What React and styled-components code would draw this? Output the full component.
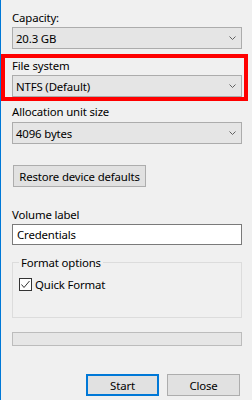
import React from "react";
import styled, { createGlobalStyle } from "styled-components";

const Global = createGlobalStyle`
  html, body { margin: 0; padding: 0; background: #f0f0f0; }
  * { box-sizing: border-box; }
`;

const FONT = `"Segoe UI", "Noto Sans", "DejaVu Sans", sans-serif`;

const Window = styled.div`
  width: 252px;
  height: 400px;
  background: #f0f0f0;
  border-left: 1px solid #0078d7;
  padding: 10px 10px 0 11px;
  display: flex;
  flex-direction: column;
  font-family: ${FONT};
  font-size: 11.4px;
  letter-spacing: -0.15px;
  color: #000;
  overflow: hidden;
`;

const Label = styled.div`
  height: 15px;
  line-height: 15px;
  margin-top: ${(p) => p.$mt || 0}px;
  white-space: nowrap;
`;

const ComboBox = styled.div`
  height: 22px;
  margin-top: ${(p) => (p.$mt == null ? 2 : p.$mt)}px;
  background: #e5e5e5;
  border: 1px solid #acacac;
  display: flex;
  align-items: center;
  justify-content: space-between;
  padding: 1px 5px 0 3px;
  line-height: 15px;
`;

const Chevron = styled.svg`
  width: 7px;
  height: 5px;
  display: block;
`;

const Highlight = styled.div`
  margin: 5px -6px 0 -11px;
  border: 4px solid #ff0000;
  padding: 0 2px 0 7px;
  display: flex;
  flex-direction: column;
`;

const Button = styled.button`
  height: 22px;
  width: ${(p) => p.$w}px;
  margin: 0;
  padding: 0;
  background: #e1e1e1;
  border: ${(p) => (p.$default ? "2px solid #0078d7" : "1px solid #adadad")};
  font-family: ${FONT};
  font-size: inherit;
  letter-spacing: inherit;
  color: #000;
  line-height: 15px;
`;

const RestoreButton = styled(Button)`
  margin: 21px 0 0 1px;
  align-self: flex-start;
`;

const TextInput = styled.div`
  height: 21px;
  margin-top: 2px;
  background: #fff;
  border: 1px solid #7a7a7a;
  padding: 1px 0 0 4px;
  line-height: 17px;
`;

const Group = styled.fieldset`
  margin: 10px 0 0 0;
  padding: 0 6px 26px 6px;
  border: 1px solid #dcdcdc;
  min-width: 0;
`;

const Legend = styled.legend`
  padding: 0 2px;
  margin-left: 0;
  line-height: 15px;
  height: 15px;
`;

const CheckRow = styled.label`
  display: flex;
  align-items: center;
  gap: 3px;
  margin-top: 8px;
  height: 13px;
  line-height: 15px;
`;

const CheckBox = styled.span`
  width: 13px;
  height: 13px;
  border: 1px solid #333;
  background: #fff;
  display: flex;
  align-items: center;
  justify-content: center;
  flex: none;
`;

const Progress = styled.div`
  height: 14px;
  margin-top: 14px;
  background: #e6e6e6;
  border: 1px solid #bcbcbc;
`;

const ButtonRow = styled.div`
  display: flex;
  justify-content: flex-end;
  gap: 8px;
  margin-top: 28px;
  padding-right: 2px;
`;

function Combo({ value, mt }) {
  return (
    <ComboBox $mt={mt}>
      <span>{value}</span>
      <Chevron viewBox="0 0 7 5">
        <polyline points="0.5,0.5 3.5,3.5 6.5,0.5" fill="none" stroke="#606060" strokeWidth="1" />
      </Chevron>
    </ComboBox>
  );
}

export default function App() {
  return (
    <>
      <Global />
      <Window>
        <Label>Capacity:</Label>
        <Combo value="20.3 GB" />
        <Highlight>
          <Label>File system</Label>
          <Combo value="NTFS (Default)" />
        </Highlight>
        <Label $mt={3}>Allocation unit size</Label>
        <Combo value="4096 bytes" mt={3} />
        <RestoreButton $w={133}>Restore device defaults</RestoreButton>
        <Label $mt={20}>Volume label</Label>
        <TextInput>Credentials</TextInput>
        <Group>
          <Legend>Format options</Legend>
          <CheckRow>
            <CheckBox>
              <svg width="11" height="11" viewBox="0 0 11 11">
                <polyline points="1.5,5.5 4,8.5 9.5,2" fill="none" stroke="#333" strokeWidth="1" />
              </svg>
            </CheckBox>
            Quick Format
          </CheckRow>
        </Group>
        <Progress />
        <ButtonRow>
          <Button $w={73} $default>Start</Button>
          <Button $w={73}>Close</Button>
        </ButtonRow>
      </Window>
    </>
  );
}
